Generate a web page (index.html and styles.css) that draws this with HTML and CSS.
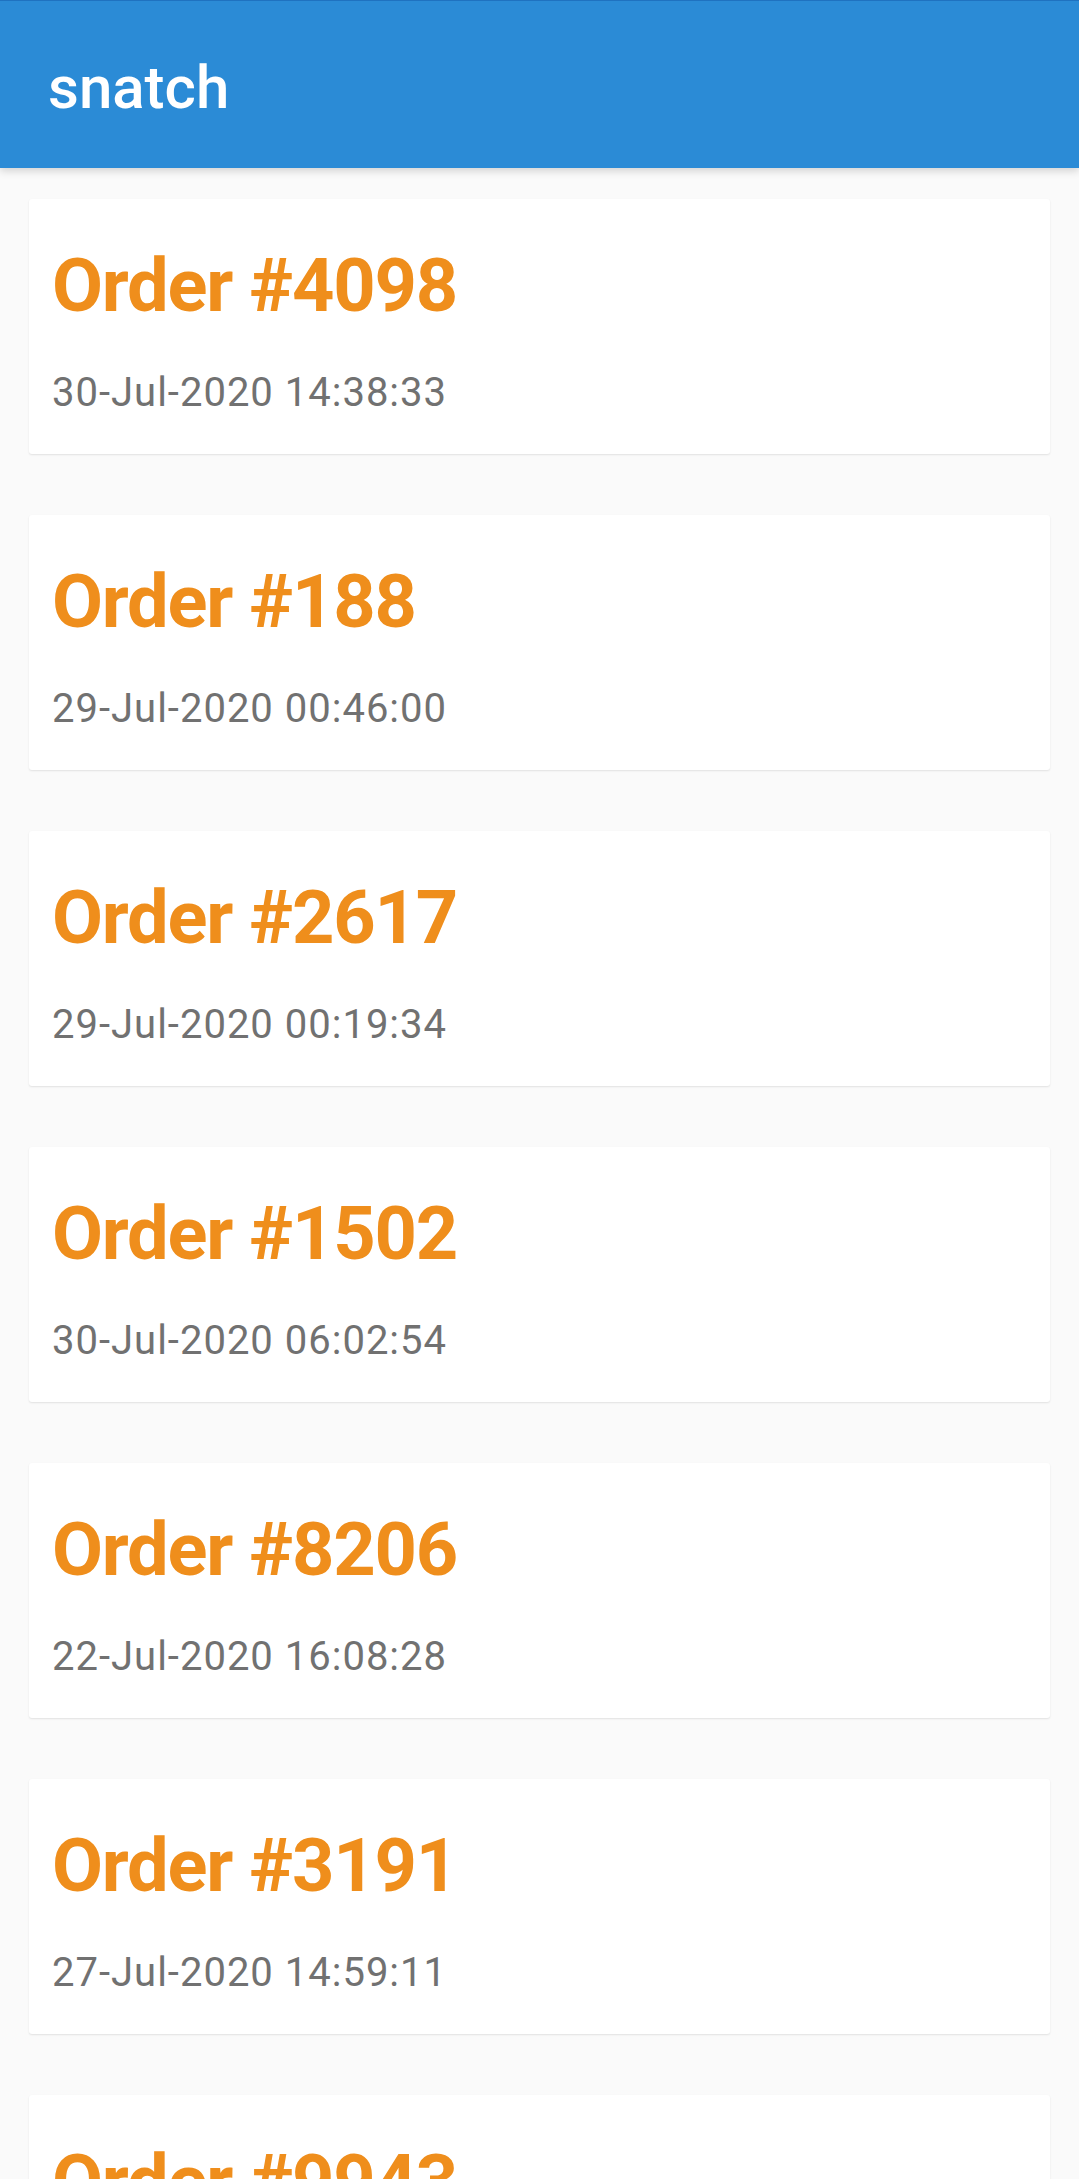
FILE: index.html
```html
<!DOCTYPE html>
<html>
<head>
<meta charset="utf-8">
<link rel="stylesheet" href="styles.css">
</head>
<body>
<header class="appbar"><h1 class="appbar-title">snatch</h1></header>
<main class="list">
  <div class="card"><div class="card-title">Order #4098</div><div class="card-date">30-Jul-2020 14:38:33</div></div>
  <div class="card"><div class="card-title">Order #188</div><div class="card-date">29-Jul-2020 00:46:00</div></div>
  <div class="card"><div class="card-title">Order #2617</div><div class="card-date">29-Jul-2020 00:19:34</div></div>
  <div class="card"><div class="card-title">Order #1502</div><div class="card-date">30-Jul-2020 06:02:54</div></div>
  <div class="card"><div class="card-title">Order #8206</div><div class="card-date">22-Jul-2020 16:08:28</div></div>
  <div class="card"><div class="card-title">Order #3191</div><div class="card-date">27-Jul-2020 14:59:11</div></div>
  <div class="card"><div class="card-title">Order #9943</div><div class="card-date">25-Jul-2020 10:12:40</div></div>
</main>
</body>
</html>
```
FILE: styles.css
```css
html, body {
  margin: 0;
  padding: 0;
}
body {
  background: #fafafa;
  font-family: Roboto, "Noto Sans", sans-serif;
  height: 2179px;
  overflow: hidden;
}
.appbar {
  position: relative;
  z-index: 2;
  height: 168px;
  box-sizing: border-box;
  background: #2b8bd6;
  border-top: 1px solid #1f72c0;
  padding: 53px 0 0 48px;
  box-shadow: 0 3px 8px rgba(0,0,0,0.16);
}
.appbar-title {
  margin: 0;
  color: #ffffff;
  font-size: 60px;
  font-weight: 500;
  line-height: 68px;
}
.list {
  display: flex;
  flex-direction: column;
  gap: 61px;
  padding: 31px 29px 0;
}
.card {
  background: #ffffff;
  border-radius: 3px;
  box-shadow: 0 1px 2px rgba(0,0,0,0.10);
  padding: 44px 23px 37px;
  min-height: 255px;
  box-sizing: border-box;
}
.card-title {
  color: #ef8e1c;
  font-size: 74px;
  font-weight: 700;
  line-height: 86px;
  letter-spacing: -1.2px;
}
.card-date {
  margin-top: 40px;
  color: #717171;
  font-size: 40px;
  line-height: 48px;
  letter-spacing: 1px;
}
```
